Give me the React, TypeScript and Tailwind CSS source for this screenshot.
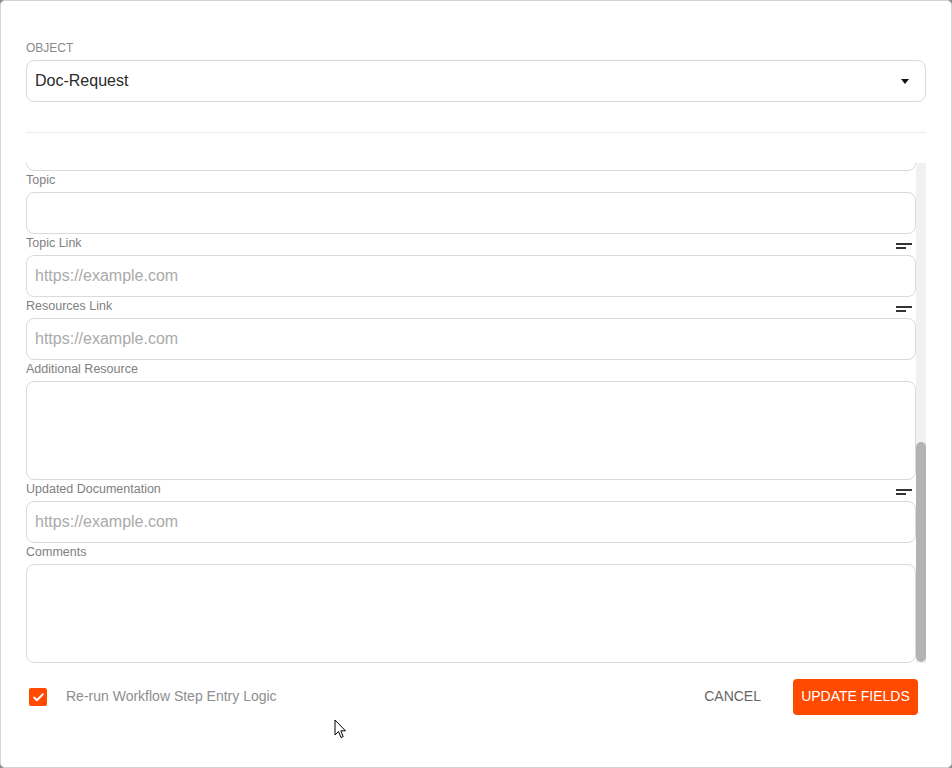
import { Check } from "lucide-react";

type Field = {
  label: string;
  kind: "input" | "textarea";
  placeholder?: string;
  sortable?: boolean;
};

const fields: Field[] = [
  { label: "Topic", kind: "input" },
  { label: "Topic Link", kind: "input", placeholder: "https://example.com", sortable: true },
  { label: "Resources Link", kind: "input", placeholder: "https://example.com", sortable: true },
  { label: "Additional Resource", kind: "textarea" },
  { label: "Updated Documentation", kind: "input", placeholder: "https://example.com", sortable: true },
  { label: "Comments", kind: "textarea" },
];

function LinesIcon() {
  return (
    <div className="mb-[1px] mr-[4px] flex w-4 flex-col gap-[2px]">
      <div className="h-[2px] w-4 bg-[#333]" />
      <div className="h-[2px] w-[10px] bg-[#333]" />
    </div>
  );
}

function FieldRow({ field }: { field: Field }) {
  return (
    <div className="flex flex-col">
      <div className="flex h-4 items-end justify-between">
        <span className="translate-y-px text-[12.5px] leading-4 text-[#808080]">{field.label}</span>
        {field.sortable && <LinesIcon />}
      </div>
      {field.kind === "input" ? (
        <div className="mt-[5px] flex h-[42px] items-center rounded-[8px] border border-[#dadada] bg-white px-[8px] text-[16px] text-[#aaaaaa]">
          {field.placeholder}
        </div>
      ) : (
        <div className="mt-[5px] h-[99px] rounded-[8px] border border-[#dadada] bg-white" />
      )}
    </div>
  );
}

export default function App() {
  return (
    <div className="relative h-[768px] w-[952px] bg-[#8a8a8a] font-['Liberation_Sans',Arial,sans-serif]">
      <div className="flex h-full flex-col rounded-[5px] border border-[#d4d4d4] bg-white px-[25px] pt-[39px]">
        {/* OBJECT SELECT */}
        <span className="text-[12px] leading-4 text-[#8a8a8a]">OBJECT</span>
        <div className="mt-[4px] flex h-[42px] items-center justify-between rounded-[8px] border border-[#d9d9d9] pl-[8px] pr-[16px]">
          <span className="text-[16px] text-[#2a2a2a]">Doc-Request</span>
          <svg width="8" height="5" viewBox="0 0 8 5">
            <path d="M0 0 L8 0 L4 5 Z" fill="#111" />
          </svg>
        </div>

        <div className="mt-[30px] h-px bg-[#ececec]" />

        {/* SCROLL AREA */}
        <div className="mt-[30px] flex h-[500px]">
          <div className="flex flex-1 flex-col overflow-hidden">
            <div className="-mt-[34px] h-[42px] shrink-0 rounded-[8px] border border-[#dadada]" />
            {fields.map((f) => (
              <FieldRow key={f.label} field={f} />
            ))}
          </div>
          <div className="flex w-[10px] flex-col bg-[#f1f1f1]">
            <div className="h-[279px]" />
            <div className="h-[220px] rounded-full bg-[#b3b3b3]" />
          </div>
        </div>

        {/* FOOTER */}
        <div className="mt-[16px] flex h-[36px] items-center">
          <div className="ml-[3px] flex h-[18px] w-[18px] items-center justify-center rounded-[2px] bg-[#ff4a00]">
            <Check className="h-[13px] w-[13px] text-white" strokeWidth={3.5} />
          </div>
          <span className="ml-[19px] -translate-y-px text-[14px] text-[#8e8e8e]">Re-run Workflow Step Entry Logic</span>
          <span className="ml-auto -translate-y-px text-[14px] text-[#666]">CANCEL</span>
          <button className="ml-[32px] mr-[8px] flex h-[36px] w-[125px] items-center justify-center rounded-[4px] bg-[#ff4a00] text-[14px] font-medium text-white">
            <span className="-translate-y-px">UPDATE FIELDS</span>
          </button>
        </div>
      </div>

      {/* mouse cursor */}
      <svg className="absolute left-[334px] top-[719px]" width="13" height="20" viewBox="0 0 13 20">
        <path d="M1 1 L1 16 L4.5 12.5 L7 18.5 L9.2 17.6 L6.8 11.8 L11.5 11.8 Z" fill="#fff" stroke="#000" strokeWidth="1" strokeLinejoin="round" />
      </svg>
    </div>
  );
}
